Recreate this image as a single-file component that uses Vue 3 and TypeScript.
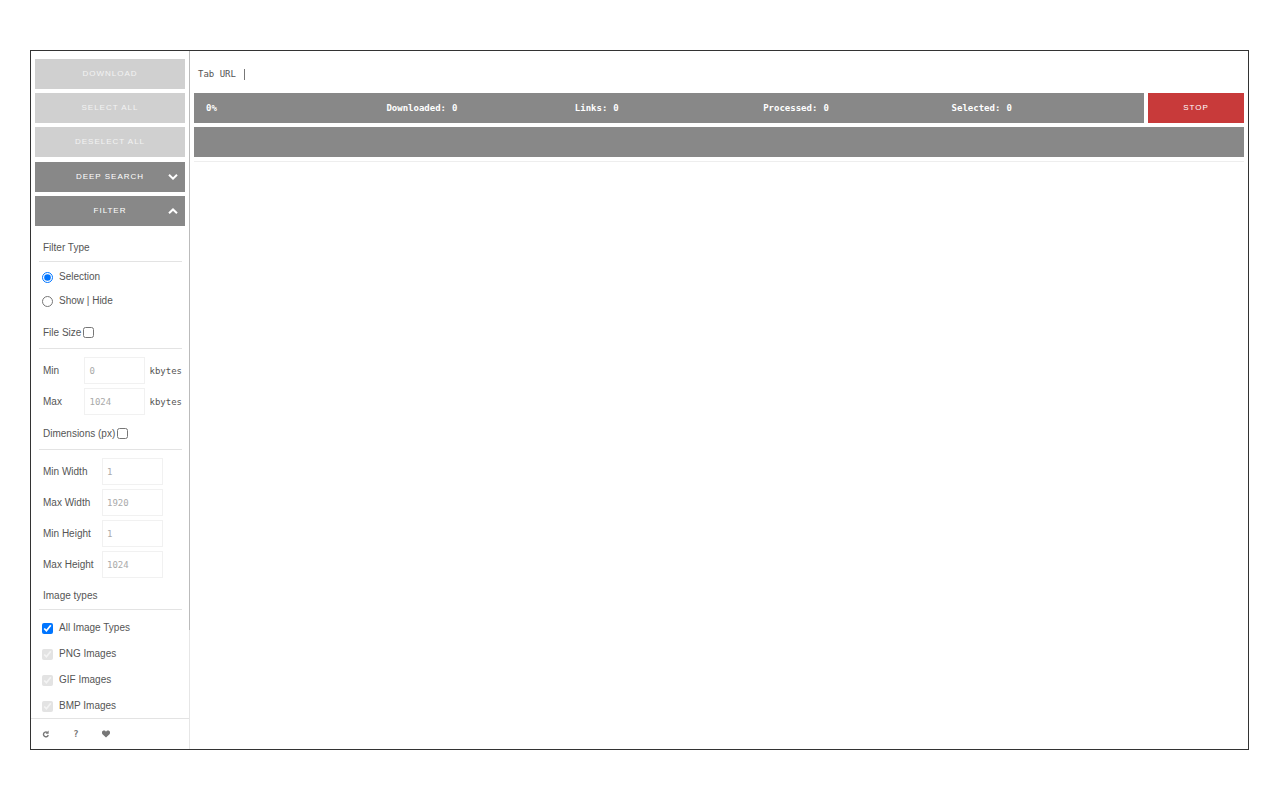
<script setup lang="ts">
import { ref } from 'vue'

interface Field { id: string; label: string; value: string }
interface Stat { label: string; value: string }

const actions: string[] = ['Download', 'Select all', 'Deselect all']
const filterType = ref<string>('selection')
const bySize = ref<boolean>(false)
const byDimensions = ref<boolean>(false)
const allTypes = ref<boolean>(true)
const tabUrl = ref<string>('')

const sizes = ref<Field[]>([
  { id: 'min-size', label: 'Min', value: '0' },
  { id: 'max-size', label: 'Max', value: '1024' },
])
const dimensions = ref<Field[]>([
  { id: 'min-width', label: 'Min Width', value: '1' },
  { id: 'max-width', label: 'Max Width', value: '1920' },
  { id: 'min-height', label: 'Min Height', value: '1' },
  { id: 'max-height', label: 'Max Height', value: '1024' },
])
const imageTypes: string[] = ['PNG Images', 'GIF Images', 'BMP Images']
const stats: Stat[] = [
  { label: 'Downloaded:', value: '0' },
  { label: 'Links:', value: '0' },
  { label: 'Processed:', value: '0' },
  { label: 'Selected:', value: '0' },
]
</script>

<template>
  <div class="page">
    <div class="frame">
      <aside class="sidebar">
        <div class="panel">
          <div class="buttons">
            <button v-for="a in actions" :key="a" class="btn" type="button" disabled>{{ a }}</button>
          </div>
          <div class="buttons toggles">
            <button class="btn" type="button">
              Deep search
              <svg class="chevron" viewBox="0 0 10 8"><path d="M1 1.8 L5 5.6 L9 1.8" /></svg>
            </button>
            <button class="btn" type="button">
              Filter
              <svg class="chevron" viewBox="0 0 10 8"><path d="M1 6.2 L5 2.4 L9 6.2" /></svg>
            </button>
          </div>

          <div class="filters">
            <div class="heading type-heading">Filter Type</div>
            <div class="radios">
              <label class="choice"><input v-model="filterType" type="radio" name="filter" value="selection" />Selection</label>
              <label class="choice"><input v-model="filterType" type="radio" name="filter" value="toggle" />Show | Hide</label>
            </div>

            <label class="heading">File Size<input v-model="bySize" type="checkbox" /></label>
            <div class="fields">
              <div v-for="f in sizes" :key="f.id" class="field size">
                <label :for="f.id">{{ f.label }}</label>
                <input :id="f.id" v-model="f.value" type="text" :disabled="!bySize" />
                <span class="unit">kbytes</span>
              </div>
            </div>

            <label class="heading">Dimensions (px)<input v-model="byDimensions" type="checkbox" /></label>
            <div class="fields">
              <div v-for="f in dimensions" :key="f.id" class="field">
                <label :for="f.id">{{ f.label }}</label>
                <input :id="f.id" v-model="f.value" type="text" :disabled="!byDimensions" />
              </div>
            </div>

            <div class="heading type-heading">Image types</div>
            <div class="types">
              <label class="choice"><input v-model="allTypes" type="checkbox" />All Image Types</label>
              <label v-for="t in imageTypes" :key="t" class="choice">
                <input class="off" type="checkbox" checked disabled />{{ t }}
              </label>
            </div>
          </div>
        </div>

        <footer class="footer">
          <button type="button" aria-label="Reload">
            <svg viewBox="0 0 8 8"><path d="M5.2 2.4 A2.4 2.4 0 1 0 6.2 5" fill="none" stroke="currentColor" stroke-width="1.4" /><path d="M6.6 0.6 V3.8 H3.6 Z" fill="currentColor" /></svg>
          </button>
          <button type="button" class="help">?</button>
          <button type="button" aria-label="Favourite">
            <svg viewBox="0 0 8 8"><path d="M4 7.5 L0.5 4.2 C-0.8 2.6 0.2 0.6 2 0.6 C3 0.6 3.6 1.1 4 1.7 C4.4 1.1 5 0.6 6 0.6 C7.8 0.6 8.8 2.6 7.5 4.2 Z" fill="currentColor" /></svg>
          </button>
        </footer>
      </aside>
      <div class="track"><div class="thumb"></div></div>

      <main class="main">
        <div class="url">
          <label for="tab-url">Tab URL</label>
          <input id="tab-url" v-model="tabUrl" type="text" />
        </div>
        <div class="status">
          <div class="stats">
            <div class="stat percent">0%</div>
            <div v-for="s in stats" :key="s.label" class="stat">
              <span>{{ s.label }}</span>
              <span>{{ s.value }}</span>
            </div>
          </div>
          <button class="btn stop" type="button">Stop</button>
        </div>
        <div class="progress"></div>
        <hr />
      </main>
    </div>
  </div>
</template>

<style>
body {
  margin: 0;
  background: #fff;
}
</style>

<style scoped>
* {
  box-sizing: border-box;
}
.page {
  display: flex;
  min-height: 100vh;
  padding: 50px 31px 50px 30px;
  font: 10px/14px "Liberation Sans", Arial, sans-serif;
  color: #555;
}
.frame {
  display: flex;
  flex: 1;
  border: 1px solid #333;
}
.sidebar {
  display: flex;
  flex-direction: column;
  width: 158px;
}
.panel {
  flex: 1 1 0;
  min-height: 0;
  padding-top: 8px;
  overflow: hidden;
}
.buttons {
  display: flex;
  flex-direction: column;
  gap: 4px;
  padding: 0 4px;
}
.toggles {
  margin-top: 5px;
}
.btn {
  position: relative;
  height: 30px;
  padding: 0;
  border: 0;
  background: #888;
  color: #fff;
  font: 8px/10px "Liberation Sans", Arial, sans-serif;
  letter-spacing: 1px;
  text-transform: uppercase;
}
.btn:disabled {
  background: #d0d0d0;
  color: #f3f3f3;
}
.chevron {
  position: absolute;
  top: 11px;
  right: 7px;
  width: 10px;
  height: 8px;
  fill: none;
  stroke: #fff;
  stroke-width: 2;
}
.filters {
  padding: 8px 7px 0 8px;
}
input[type="radio"],
input[type="checkbox"] {
  width: 11px;
  height: 11px;
  margin: 0;
}
.heading {
  display: flex;
  align-items: center;
  gap: 2px;
  height: 32px;
  padding-left: 4px;
  border-bottom: 1px solid #e3e3e3;
}
.type-heading {
  height: 28px;
}
.radios {
  padding: 3px 0 4px;
}
.choice {
  display: flex;
  align-items: center;
  gap: 6px;
  height: 24px;
  padding-left: 3px;
}
.fields {
  display: flex;
  flex-direction: column;
  gap: 4px;
  padding: 8px 0 3px 4px;
}
.fields + .type-heading {
  margin-top: 1px;
}
.field {
  display: flex;
  align-items: center;
}
.field label {
  width: 59px;
}
.size label {
  width: 42px;
}
.field input {
  width: 61px;
  height: 27px;
  padding: 0 4px;
  border: 1px solid #f1f1f1;
  background: #fff;
  color: #aaa;
  font: 9px/12px "DejaVu Sans Mono", monospace;
}
.unit {
  margin-left: 4px;
  font: 9px/12px "DejaVu Sans Mono", monospace;
}
.types {
  display: flex;
  flex-direction: column;
  padding-top: 5px;
}
.types .choice {
  height: 26px;
}
.off {
  opacity: 0.6;
}
.footer {
  display: flex;
  gap: 18px;
  height: 31px;
  align-items: center;
  padding-left: 9px;
  border-top: 1px solid #e3e3e3;
}
.footer button {
  display: grid;
  place-items: center;
  width: 12px;
  height: 12px;
  padding: 0;
  border: 0;
  background: none;
  color: #777;
}
.footer svg {
  width: 8px;
  height: 8px;
}
.footer .help {
  font: bold 9px/12px "DejaVu Sans Mono", monospace;
}
.track {
  width: 1px;
  background: #e6e6e6;
}
.thumb {
  height: 83%;
  background: #bbb;
}
.main {
  display: flex;
  flex: 1;
  flex-direction: column;
  gap: 4px;
  padding: 8px 4px;
  font: 9px/12px "DejaVu Sans Mono", monospace;
}
.url {
  display: flex;
  align-items: center;
  gap: 8px;
  height: 30px;
  padding-left: 4px;
}
.url input {
  flex: 1;
  height: 11px;
  padding: 0 4px;
  border: 0;
  border-left: 1px solid #777;
  outline: 0;
  background: none;
  color: #555;
  font: inherit;
}
.status {
  display: flex;
  gap: 4px;
}
.stats {
  display: grid;
  flex: 1;
  grid-template-columns: repeat(5, 1fr);
  align-items: center;
  padding: 0 4px;
  background: #888;
  color: #fff;
  font-weight: bold;
}
.stat {
  display: flex;
  gap: 6px;
}
.percent {
  padding-left: 8px;
}
.stop {
  width: 96px;
  background: #c83a3a;
}
.progress {
  height: 30px;
  background: #888;
}
hr {
  width: 100%;
  margin: 0;
  border: 0;
  border-top: 1px solid #eee;
}
</style>
